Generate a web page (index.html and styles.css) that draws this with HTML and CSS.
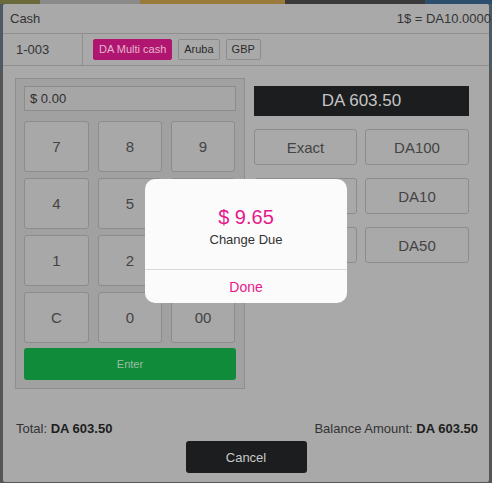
FILE: index.html
```html
<!DOCTYPE html>
<html>
<head>
<meta charset="utf-8">
<link rel="stylesheet" href="styles.css">
</head>
<body>
<div class="backdrop">
  <div class="bg-strip">
    <span class="seg s1"></span><span class="seg s2"></span><span class="seg s3"></span><span class="seg s4"></span><span class="seg s5"></span>
  </div>
  <div class="dialog">
    <div class="header">
      <span class="title">Cash</span>
      <span class="rate">1$ = DA10.0000</span>
    </div>
    <div class="subheader">
      <div class="order">1-003</div>
      <div class="tags">
        <span class="tag active">DA Multi cash</span>
        <span class="tag">Aruba</span>
        <span class="tag">GBP</span>
      </div>
    </div>
    <div class="content">
      <div class="pad-panel">
        <div class="amount-input">$ 0.00</div>
        <div class="keypad">
          <div class="key">7</div><div class="key">8</div><div class="key">9</div>
          <div class="key">4</div><div class="key">5</div><div class="key">6</div>
          <div class="key">1</div><div class="key">2</div><div class="key">3</div>
          <div class="key">C</div><div class="key">0</div><div class="key">00</div>
        </div>
        <div class="enter">Enter</div>
      </div>
      <div class="quick">
        <div class="due">DA 603.50</div>
        <div class="quick-grid">
          <div class="qbtn">Exact</div><div class="qbtn">DA100</div>
          <div class="qbtn">DA20</div><div class="qbtn">DA10</div>
          <div class="qbtn">DA5</div><div class="qbtn">DA50</div>
        </div>
      </div>
    </div>
    <div class="totals">
      <span>Total: <b>DA 603.50</b></span>
      <span>Balance Amount: <b>DA 603.50</b></span>
    </div>
    <div class="actions">
      <div class="cancel">Cancel</div>
    </div>
  </div>
  <div class="popup">
    <div class="popup-body">
      <div class="change">$ 9.65</div>
      <div class="change-label">Change Due</div>
    </div>
    <div class="popup-done">Done</div>
  </div>
</div>
</body>
</html>
```

FILE: styles.css
```css
* { box-sizing: border-box; }
html, body { margin: 0; padding: 0; }
body {
  width: 492px;
  height: 483px;
  overflow: hidden;
  background: #565656;
  font-family: "Liberation Sans", Arial, sans-serif;
  color: #3a3a3a;
}
.backdrop {
  position: relative;
  width: 492px;
  height: 483px;
  padding: 4px 3px 1px 3px;
  background: linear-gradient(to bottom, #4e5a63 0, #4e5a63 70px, #565656 70px);
}
.bg-strip {
  position: absolute;
  left: 0; top: 0; width: 492px; height: 4px;
  display: flex;
}
.seg { height: 4px; display: block; }
.s1 { width: 40px; background: #6a6a3a; }
.s2 { width: 100px; background: #8a8a8a; }
.s3 { width: 145px; background: #9a7a3a; }
.s4 { width: 140px; background: #3a3a3a; }
.s5 { flex: 1; background: #2d4f6e; }

.dialog {
  width: 486px;
  height: 478px;
  background: #a9a9a9;
  display: flex;
  flex-direction: column;
  border-radius: 2px;
}
.header {
  height: 30px;
  display: flex;
  justify-content: space-between;
  align-items: center;
  padding: 0 0 0 7px;
  border-bottom: 1px solid #8f8f8f;
  font-size: 13px;
  color: #333;
}
.rate { margin-right: -2px; }
.subheader {
  height: 32px;
  display: flex;
  border-bottom: 1px solid #8f8f8f;
}
.order {
  width: 80px;
  border-right: 1px solid #8f8f8f;
  display: flex;
  align-items: center;
  padding-left: 13px;
  font-size: 13px;
  color: #333;
}
.tags {
  display: flex;
  align-items: center;
  gap: 6px;
  padding-left: 10px;
}
.tag {
  font-size: 11px;
  height: 21px;
  line-height: 19px;
  padding: 0 5px;
  border: 1px solid #8c8c8c;
  border-radius: 2px;
  color: #2a2a2a;
  background: #a9a9a9;
}
.tag.active {
  background: #b0166f;
  border-color: #b0166f;
  color: #e6b4d0;
}
.content {
  display: flex;
  padding: 12px 20px 0 12px;
  gap: 9px;
}
.pad-panel {
  width: 230px;
  border: 1px solid #8e8e8e;
  background: #a1a1a1;
  padding: 7px 8px 8px 8px;
}
.amount-input {
  height: 25px;
  border: 1px solid #8c8c8c;
  background: #a6a6a6;
  font-size: 13px;
  line-height: 23px;
  padding-left: 5px;
  color: #2e2e2e;
}
.keypad {
  margin-top: 10px;
  display: grid;
  grid-template-columns: 65px 64px 64px;
  column-gap: 9px;
  grid-auto-rows: 51px;
  row-gap: 6px;
}
.key {
  border: 1px solid #8c8c8c;
  border-radius: 3px;
  background: #a8a8a8;
  display: flex;
  align-items: center;
  justify-content: center;
  font-size: 15px;
  color: #444;
}
.enter {
  margin-top: 5px;
  height: 32px;
  border-radius: 3px;
  background: #0f8b3a;
  color: #9cbfa4;
  font-size: 11px;
  display: flex;
  align-items: center;
  justify-content: center;
}
.quick {
  width: 215px;
  padding-top: 8px;
}
.due {
  height: 30px;
  background: #1b1d1e;
  color: #c4c4c4;
  font-size: 17px;
  display: flex;
  align-items: center;
  justify-content: center;
}
.quick-grid {
  margin-top: 13px;
  display: grid;
  grid-template-columns: 103px 104px;
  column-gap: 8px;
  grid-auto-rows: 36px;
  row-gap: 13px;
}
.qbtn {
  border: 1px solid #8c8c8c;
  border-radius: 3px;
  background: #a9a9a9;
  display: flex;
  align-items: center;
  justify-content: center;
  font-size: 15px;
  color: #444;
}
.totals {
  margin-top: 32px;
  display: flex;
  justify-content: space-between;
  padding: 0 11px 0 13px;
  font-size: 13px;
  color: #333;
}
.totals b { color: #1e1e1e; }
.actions {
  display: flex;
  justify-content: center;
  margin-top: 5px;
}
.cancel {
  width: 121px;
  height: 32px;
  background: #1b1d1e;
  border-radius: 3px;
  color: #c9c9c9;
  font-size: 13px;
  display: flex;
  align-items: center;
  justify-content: center;
}
.popup {
  position: absolute;
  left: 145px;
  top: 179px;
  width: 202px;
  height: 124px;
  background: #fbfbfb;
  border-radius: 10px;
  display: flex;
  flex-direction: column;
}
.popup-body {
  height: 91px;
  border-bottom: 1px solid #ddd7df;
  display: flex;
  flex-direction: column;
  align-items: center;
  padding-top: 26px;
}
.change {
  font-size: 20px;
  color: #e5198c;
  line-height: 24px;
}
.change-label {
  margin-top: 3px;
  font-size: 13px;
  color: #333;
}
.popup-done {
  flex: 1;
  display: flex;
  align-items: center;
  justify-content: center;
  color: #e5198c;
  font-size: 14px;
}
```
